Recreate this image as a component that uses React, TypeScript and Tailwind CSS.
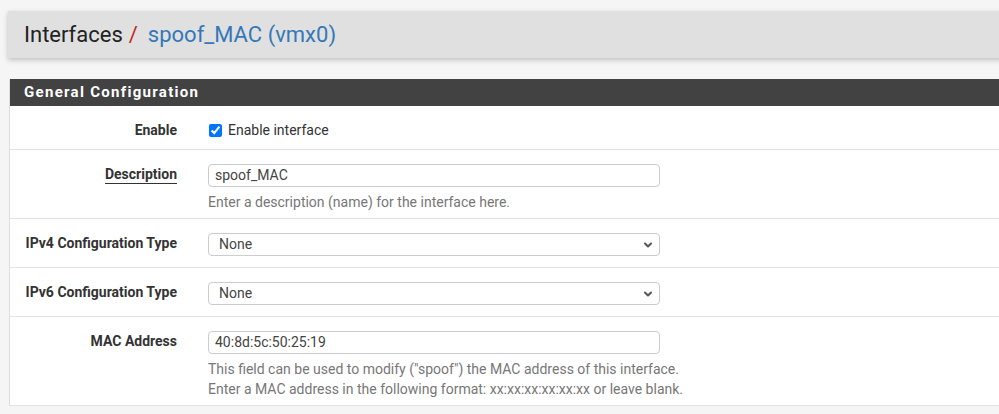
import { ChevronDown } from "lucide-react";

type Row = {
  label: string;
  kind: "check" | "input" | "select";
  value?: string;
  help?: string[];
  underline?: boolean;
};

const rows: Row[] = [
  { label: "Enable", kind: "check", value: "Enable interface" },
  {
    label: "Description",
    kind: "input",
    value: "spoof_MAC",
    underline: true,
    help: ["Enter a description (name) for the interface here."],
  },
  { label: "IPv4 Configuration Type", kind: "select", value: "None" },
  { label: "IPv6 Configuration Type", kind: "select", value: "None" },
  {
    label: "MAC Address",
    kind: "input",
    value: "40:8d:5c:50:25:19",
    help: [
      'This field can be used to modify ("spoof") the MAC address of this interface.',
      "Enter a MAC address in the following format: xx:xx:xx:xx:xx:xx or leave blank.",
    ],
  },
];

const FormRow = ({ row }: { row: Row }) => {
  const isCheck = row.kind === "check";
  return (
    <div
      className={`flex border-b border-[#e2e2e2] pt-[14px] ${
        row.help ? "pb-[6px]" : isCheck ? "pb-[9px]" : "pb-[11px]"
      }`}
    >
      <div className="w-[167px] shrink-0 text-right">
        <div
          className={`text-[14px] font-bold leading-[20px] text-[#333] ${
            isCheck ? "h-[20px]" : "h-[23px]"
          }`}
        >
          <span className={row.underline ? "border-b-[1.5px] border-[#333] pb-[1px]" : ""}>
            {row.label}
          </span>
        </div>
      </div>
      <div className="ml-[31px] w-[452px]">
        {isCheck && (
          <label className="flex h-[20px] items-center gap-[6px] text-[14px] text-[#333]">
            <input
              type="checkbox"
              defaultChecked
              className="m-0 ml-[1px] h-[13px] w-[13px] accent-[#0075ff]"
            />
            {row.value}
          </label>
        )}
        {row.kind === "input" && (
          <div className="flex h-[23px] items-center rounded-[4px] border border-[#cccccc] bg-white pl-[6px] text-[14px] text-[#444]">
            {row.value}
          </div>
        )}
        {row.kind === "select" && (
          <div className="flex h-[23px] items-center justify-between rounded-[4px] border border-[#cccccc] bg-white pl-[10px] pr-[5px] text-[14px] text-[#444]">
            <span>{row.value}</span>
            <ChevronDown className="h-[12px] w-[12px] text-[#555]" strokeWidth={4} />
          </div>
        )}
        {row.help && (
          <div className="mt-[5px] whitespace-nowrap text-[14px] leading-[20px] text-[#777]">
            {row.help.map((line) => (
              <div key={line}>{line}</div>
            ))}
          </div>
        )}
      </div>
    </div>
  );
};

const App = () => {
  return (
    <div className="h-[414px] overflow-hidden bg-[#f5f5f5] font-['Roboto',sans-serif]">
      <div className="ml-[8px] mr-[-20px] mt-[11px] flex h-[47px] items-center bg-[#e0e0e0] pl-[16px] text-[22px] shadow-[0_2px_5px_rgba(0,0,0,0.22)]">
        <span className="text-[#222]">Interfaces</span>
        <span className="ml-[6px] text-[#c02a1a]">/</span>
        <span className="ml-[10px] text-[#3478b8]">spoof_MAC (vmx0)</span>
      </div>

      <div className="ml-[9px] mr-[-20px] mt-[21px] border-l border-[#dddddd] bg-white">
        <div className="flex h-[27px] items-center bg-[#424242] pl-[14px] text-[15px] font-bold tracking-[1.3px] text-white">
          General Configuration
        </div>
        {rows.map((row) => (
          <FormRow key={row.label} row={row} />
        ))}
      </div>
    </div>
  );
};

export default App;
